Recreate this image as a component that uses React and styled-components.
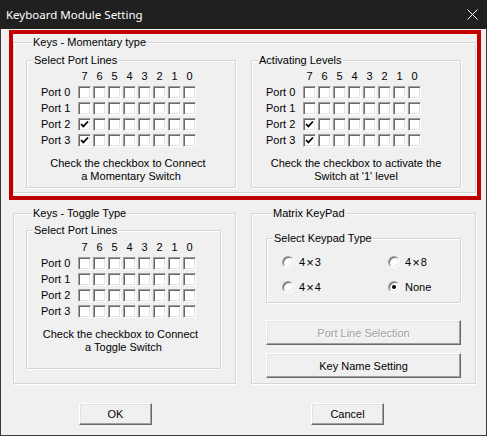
import React from 'react';
import styled, { createGlobalStyle } from 'styled-components';

const Global = createGlobalStyle`
  html, body { margin: 0; padding: 0; background: #fff; }
  body { font-family: "Liberation Sans", Arial, sans-serif; font-size: 11px; color: #000; }
`;

const Window = styled.div`
  position: relative;
  width: 487px;
  height: 436px;
  box-sizing: border-box;
  border: 1px solid #3a3a3a;
  border-top: none;
  background: #f0f0f0;
  display: flex;
  flex-direction: column;
`;

const TitleBar = styled.div`
  height: 29px;
  flex: none;
  background: #202020;
  color: #fff;
  display: flex;
  align-items: center;
  padding-left: 6px;
  font-family: "Noto Sans", "Open Sans", sans-serif;
  font-size: 11.5px;
  margin: 0 -1px;
`;

const CloseIcon = styled.svg`
  margin-left: auto;
  margin-right: 9px;
  width: 11px;
  height: 11px;
`;

const Body = styled.div`
  flex: 1;
  padding: 7px 10px 0 12px;
  display: flex;
  flex-direction: column;
`;

const Group = styled.fieldset`
  margin: 0;
  min-width: 0;
  box-sizing: border-box;
  width: ${p => p.$w}px;
  height: ${p => p.$h}px;
  padding: ${p => p.$pt || 0}px 0 0 ${p => p.$pl || 0}px;
  border: 1px solid #d5d5d5;
  box-shadow: inset 1px 1px 0 #fff, 1px 1px 0 #fff;
  flex: none;
`;

const Legend = styled.legend`
  margin-left: 6px;
  padding: 0 1px;
  line-height: 13px;
  font-size: 11px;
  background: #f0f0f0;
`;

const Row = styled.div`
  display: flex;
  gap: ${p => p.$gap}px;
  margin-top: ${p => p.$mt || 0}px;
`;

const Column = styled.div`
  display: flex;
  flex-direction: column;
  gap: ${p => p.$gap || 0}px;
`;

const PortGrid = styled.div`
  display: grid;
  grid-template-columns: 35px repeat(8, 13px);
  grid-auto-rows: 13px;
  column-gap: 2px;
  row-gap: 3px;
  margin-left: 14px;
  line-height: 13px;
`;

const BitLabel = styled.span`
  text-align: center;
  line-height: 13px;
`;

const PortLabel = styled.span`
  line-height: 13px;
  white-space: nowrap;
`;

const Box = styled.span`
  box-sizing: border-box;
  width: 13px;
  height: 13px;
  background: #fff;
  border: 1px solid;
  border-color: #a0a0a0 #fff #fff #a0a0a0;
  box-shadow: inset 1px 1px 0 #696969, inset -1px -1px 0 #e3e3e3;
  display: flex;
  align-items: center;
  justify-content: center;
`;

const Note = styled.div`
  margin-top: ${p => p.$mt}px;
  text-align: center;
  line-height: 13px;
  white-space: pre;
`;

const RadioGrid = styled.div`
  display: grid;
  grid-template-columns: 106px 106px;
  grid-auto-rows: 16px;
  row-gap: 9px;
  margin-left: 15px;
`;

const RadioItem = styled.label`
  display: flex;
  align-items: center;
  gap: 5px;
`;

const RadioCircle = styled.span`
  box-sizing: border-box;
  width: 12px;
  height: 12px;
  border-radius: 50%;
  background: #fff;
  border: 1px solid;
  border-color: #a0a0a0 #fff #fff #a0a0a0;
  box-shadow: inset 1px 1px 0 #696969, inset -1px -1px 0 #e3e3e3;
  display: flex;
  align-items: center;
  justify-content: center;
  &::after {
    content: "";
    width: 4px;
    height: 4px;
    border-radius: 50%;
    background: ${p => (p.$on ? '#000' : 'transparent')};
  }
`;

const Dim = styled.span`
  display: inline-flex;
  align-items: center;
  gap: 1px;
`;

const Times = styled.span`
  font-size: 13px;
  line-height: 11px;
`;

const Button = styled.button`
  box-sizing: border-box;
  width: ${p => p.$w}px;
  height: ${p => p.$h}px;
  margin-top: ${p => p.$mt || 0}px;
  padding: 0;
  font-family: "Liberation Sans", Arial, sans-serif;
  font-size: 11px;
  background: #f0f0f0;
  color: ${p => (p.disabled ? '#a0a0a0' : '#000')};
  text-shadow: ${p => (p.disabled ? '1px 1px 0 #fff' : 'none')};
  border: 1px solid;
  border-color: #fff #696969 #696969 #fff;
  box-shadow: inset -1px -1px 0 #a0a0a0, inset 1px 1px 0 #e3e3e3;
  flex: none;
`;

const ButtonRow = styled.div`
  display: flex;
  gap: 159px;
  margin: 19px 0 0 66px;
`;

const RedMark = styled.div`
  position: absolute;
  left: 8px;
  top: 30px;
  width: 472px;
  height: 170px;
  box-sizing: border-box;
  border: 4px solid #c00000;
  pointer-events: none;
`;

const Check = () => (
  <svg width="9" height="9" viewBox="0 0 9 9">
    <path d="M1 4 L3.3 6.4 L8 1.5" fill="none" stroke="#000" strokeWidth="1.7" />
  </svg>
);

const bits = [7, 6, 5, 4, 3, 2, 1, 0];

function PortMatrix({ checked = [] }) {
  return (
    <PortGrid>
      <span />
      {bits.map(b => (
        <BitLabel key={b}>{b}</BitLabel>
      ))}
      {[0, 1, 2, 3].map(port => (
        <React.Fragment key={port}>
          <PortLabel>Port {port}</PortLabel>
          {bits.map(b => (
            <Box key={b}>{checked.includes(`${port}-${b}`) && <Check />}</Box>
          ))}
        </React.Fragment>
      ))}
    </PortGrid>
  );
}

const Size = ({ a, b }) => (
  <Dim>
    {a}
    <Times>×</Times>
    {b}
  </Dim>
);

export default function App() {
  return (
    <>
      <Global />
      <Window>
        <TitleBar>
          Keyboard Module Setting
          <CloseIcon viewBox="0 0 11 11">
            <path d="M0.5 0.5 L10.5 10.5 M10.5 0.5 L0.5 10.5" stroke="#fff" strokeWidth="1" />
          </CloseIcon>
        </TitleBar>
        <Body>
          <Group $w={463} $h={157} $pt={5} $pl={12}>
            <Legend>Keys - Momentary type</Legend>
            <Row $gap={15}>
              <Group $w={210} $h={134} $pt={3}>
                <Legend>Select Port Lines</Legend>
                <PortMatrix checked={['2-7', '3-7']} />
                <Note $mt={10}>{'Check the checkbox to Connect  \na Momentary Switch'}</Note>
              </Group>
              <Group $w={210} $h={134} $pt={3}>
                <Legend>Activating Levels</Legend>
                <PortMatrix checked={['2-7', '3-7']} />
                <Note $mt={10}>{"Check the checkbox to activate the\nSwitch at '1' level"}</Note>
              </Group>
            </Row>
          </Group>

          <Row $gap={15} $mt={14}>
            <Group $w={223} $h={177} $pt={4} $pl={12}>
              <Legend>Keys - Toggle Type</Legend>
              <Group $w={195} $h={145} $pt={4}>
                <Legend>Select Port Lines</Legend>
                <PortMatrix />
                <Note $mt={10}>{'Check the checkbox to Connect  \na Toggle Switch'}</Note>
              </Group>
            </Group>
            <Group $w={225} $h={177} $pt={12} $pl={14}>
              <Legend>Matrix KeyPad</Legend>
              <Column $gap={8}>
                <Group $w={195} $h={71} $pt={9}>
                  <Legend>Select Keypad Type</Legend>
                  <RadioGrid>
                    <RadioItem><RadioCircle /><Size a="4" b="3" /></RadioItem>
                    <RadioItem><RadioCircle /><Size a="4" b="8" /></RadioItem>
                    <RadioItem><RadioCircle /><Size a="4" b="4" /></RadioItem>
                    <RadioItem><RadioCircle $on />None</RadioItem>
                  </RadioGrid>
                </Group>
                <Button $w={195} $h={25} $mt={9} disabled>Port Line Selection</Button>
                <Button $w={195} $h={25}>Key Name Setting</Button>
              </Column>
            </Group>
          </Row>

          <ButtonRow>
            <Button $w={73} $h={22}>OK</Button>
            <Button $w={73} $h={22}>Cancel</Button>
          </ButtonRow>
        </Body>
        <RedMark />
      </Window>
    </>
  );
}
